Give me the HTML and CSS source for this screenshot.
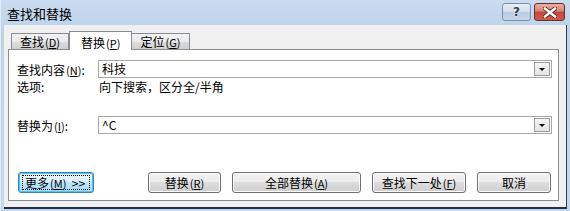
FILE: index.html
```
<!DOCTYPE html>
<html lang="zh-CN">
<head>
    <meta charset="UTF-8">
    <title>查找和替换</title>
    <link rel="stylesheet" href="styles.css">
</head>
<body>
    <div class="window">
        <div class="titlebar">
            <span class="title">查找和替换</span>
            <div class="caption-btns">
                <span class="cap help">?</span>
                <span class="cap close">
                    <svg width="14" height="11" viewBox="0 0 14 11">
                        <path d="M2 1.5 L12 9.5 M12 1.5 L2 9.5" stroke="#5a2a24" stroke-width="4.2" stroke-linecap="square"/>
                        <path d="M2 1.5 L12 9.5 M12 1.5 L2 9.5" stroke="#fff" stroke-width="2.4" stroke-linecap="square"/>
                    </svg>
                </span>
            </div>
        </div>

        <div class="client">
            <div class="tabs">
                <div class="tab">查找<span class="key">(<u>D</u>)</span></div>
                <div class="tab active">替换<span class="key">(<u>P</u>)</span></div>
                <div class="tab">定位<span class="key">(<u>G</u>)</span></div>
            </div>

            <div class="panel">
                <div class="row find">
                    <span class="label">查找内容<span class="key">(<u>N</u>)</span>:</span>
                    <div class="combo">
                        <span class="value">科技</span>
                        <span class="drop"></span>
                    </div>
                </div>

                <div class="row options">
                    <span class="label">选项:</span>
                    <span class="opt-text">向下搜索，区分全/半角</span>
                </div>

                <div class="row replace">
                    <span class="label">替换为<span class="key">(<u>I</u>)</span>:</span>
                    <div class="combo">
                        <span class="value">^C</span>
                        <span class="drop"></span>
                    </div>
                </div>

                <div class="buttons">
                    <button class="btn more"><span class="focus">更多<span class="key">(<u>M</u>)</span>&nbsp;&nbsp;&gt;&gt;</span></button>
                    <div class="btn-group">
                        <button class="btn w-replace">替换<span class="key">(<u>R</u>)</span></button>
                        <button class="btn w-all">全部替换<span class="key">(<u>A</u>)</span></button>
                        <button class="btn w-next">查找下一处<span class="key">(<u>F</u>)</span></button>
                        <button class="btn w-cancel">取消</button>
                    </div>
                </div>
            </div>
        </div>
    </div>
</body>
</html>
```

FILE: styles.css
```
body {
    margin: 0;
    font-family: "Noto Sans CJK SC", "Liberation Sans", sans-serif;
    font-size: 12px;
    color: #000;
    background: #fff;
}

.window {
    width: 570px;
    height: 211px;
    box-sizing: border-box;
    display: flex;
    flex-direction: column;
    padding: 0 3px 2px 4px;
    background: linear-gradient(#c9dcf0, #bcd3ea 30px, #c3d8ee);
    box-shadow: inset 1px 0 0 #e4edf7;
}

.titlebar {
    height: 25px;
    display: flex;
    justify-content: space-between;
    margin: 0 -3px 0 -4px;
}

.title {
    padding-left: 7px;
    line-height: 27px;
    font-size: 13px;
}

.caption-btns {
    display: flex;
    gap: 3px;
    margin: 3px 5px 0 0;
}

.cap {
    height: 18px;
    box-sizing: border-box;
    border-radius: 3px;
    display: flex;
    align-items: center;
    justify-content: center;
}

.help {
    width: 29px;
    border: 1px solid #7d8fa8;
    background: linear-gradient(#e6eef8, #cfdcec 50%, #b8cbe3 50%, #c6d6ea);
    font-family: "DejaVu Sans", sans-serif;
    font-weight: bold;
    font-size: 12px;
    color: #2d3a4a;
    text-shadow: 0 0 1px #fff, 0 0 2px #fff;
}

.close {
    width: 31px;
    border: 1px solid #6f2d26;
    background: linear-gradient(#e9b0a5, #d88172 45%, #c4473a 50%, #c85a4c);
}

.client {
    flex: 1;
    display: flex;
    flex-direction: column;
    background: #f0f0f0;
    padding: 6px 7px 6px 4px;
    border-right: 1px solid #2e3d50;
    border-bottom: 2px solid #22303f;
}

.tabs {
    display: flex;
    align-items: flex-end;
    margin: 0 0 -1px 3px;
    position: relative;
    z-index: 1;
}

.tab {
    height: 16px;
    box-sizing: border-box;
    padding: 0 8px;
    margin-bottom: 1px;
    line-height: 15px;
    border: 1px solid #898c95;
    border-bottom: none;
    background: linear-gradient(#f2f2f2, #ebebeb 50%, #dddddd 50%, #cfcfcf);
}

.tab + .tab {
    border-left: none;
}

.tab.active {
    height: 19px;
    margin-bottom: 0;
    padding: 0 11px;
    line-height: 21px;
    background: #fff;
    border-left: 1px solid #898c95;
}

.tab.active + .tab {
    border-left: none;
}

.key {
    font-size: 11px;
    margin-left: 1px;
    white-space: nowrap;
}

.key u {
    text-underline-offset: 1px;
}

.panel {
    flex: 1;
    display: flex;
    flex-direction: column;
    background: #fff;
    border: 1px solid #898c95;
    padding: 10px 6px 7px 8px;
}

.row {
    display: flex;
    align-items: center;
}

.label {
    width: 81px;
    flex-shrink: 0;
}

.combo {
    flex: 1;
    height: 18px;
    box-sizing: border-box;
    border: 1px solid #a7a7a7;
    display: flex;
    align-items: center;
    justify-content: space-between;
    padding: 0 1px 0 3px;
}

.value {
    line-height: 16px;
}

.drop {
    width: 16px;
    height: 14px;
    box-sizing: border-box;
    border: 1px solid #9a9a9a;
    background: linear-gradient(#f6f6f6, #e4e4e4);
    display: flex;
    align-items: center;
    justify-content: center;
}

.drop::after {
    content: "";
    border-left: 3px solid transparent;
    border-right: 3px solid transparent;
    border-top: 3px solid #000;
    margin-top: 1px;
}

.options {
    margin-top: 2px;
    height: 14px;
    line-height: 14px;
}

.opt-text {
    padding-left: 1px;
}

.replace {
    margin-top: 22px;
}

.buttons {
    margin-top: auto;
    display: flex;
    justify-content: space-between;
    padding: 0 1px;
}

.btn-group {
    display: flex;
    gap: 11px;
}

.btn {
    height: 21px;
    box-sizing: border-box;
    padding: 0;
    font-family: inherit;
    font-size: 12px;
    color: #000;
    white-space: nowrap;
    border: 1px solid #707070;
    border-radius: 3px;
    background: linear-gradient(#f2f2f2, #ebebeb 50%, #dddddd 50%, #cfcfcf);
    box-shadow: inset 0 0 0 1px #fbfbfb;
}

.more {
    width: 76px;
    padding: 2px 3px;
    border-color: #3c7fb1;
    background: linear-gradient(#eaf6fd, #d9f0fc 50%, #bee6fd 50%, #a7d9f5);
    box-shadow: inset 0 0 0 1px #48c6f4;
    display: flex;
    align-items: stretch;
}

.focus {
    flex: 1;
    box-sizing: border-box;
    border: 1px dotted #000;
    padding-left: 2px;
    line-height: 13px;
    text-align: left;
    white-space: nowrap;
}

.w-replace { width: 73px; }
.w-all { width: 129px; }
.w-next { width: 94px; }
.w-cancel { width: 74px; }
```
